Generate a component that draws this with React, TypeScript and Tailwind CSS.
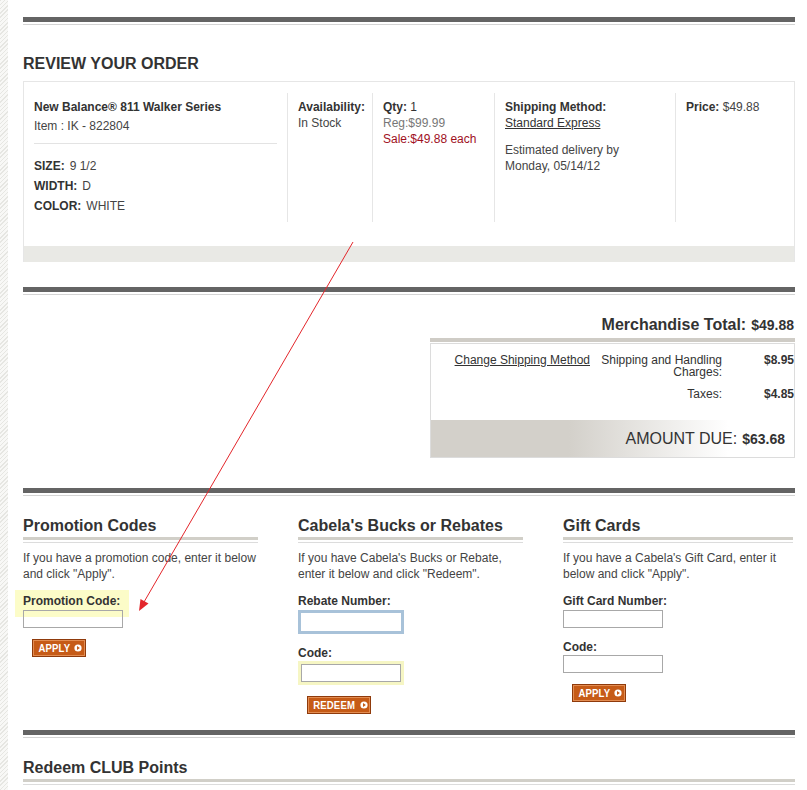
import React from "react";

function Sep({ className }: { className: string }) {
  return (
    <div className={className}>
      <div className="h-[5px] bg-[#646464]" />
      <div className="mt-[2px] h-[1px] bg-[#d4d4d4]" />
    </div>
  );
}

function ArrowIcon() {
  return (
    <svg width="8" height="8" viewBox="0 0 8 8" className="ml-[2px] shrink-0">
      <circle cx="4" cy="4" r="3.6" fill="#ffffff" />
      <path d="M3 2.1 L5.9 4 L3 5.9 Z" fill="#c65b17" />
    </svg>
  );
}

function OrangeButton({ label, className }: { label: string; className: string }) {
  return (
    <div
      className={
        "ml-[9px] mt-[11px] flex items-center justify-center border border-[#8f3a0b] bg-[#c65b17] shadow-[inset_0_0_0_1px_#e38d52] " +
        className
      }
    >
      <span className="inline-block scale-x-[0.87] text-[11px] font-bold leading-none tracking-[0.2px] text-white">
        {label}
      </span>
      <ArrowIcon />
    </div>
  );
}

function Heading({ title, className }: { title: string; className: string }) {
  return (
    <div className={className}>
      <h3 className="text-[16px] leading-[18px] font-bold text-[#333]">{title}</h3>
      <div className="mt-[2px] h-[3px] bg-[#d1cfc8]" />
      <div className="mt-[2px] h-[1px] bg-[#dcdcdc]" />
    </div>
  );
}

export default function App() {
  return (
    <div className="relative flex w-[807px] min-h-[790px] overflow-hidden bg-white text-[12px] text-[#333] font-['Liberation_Sans',Arial,sans-serif]">
      <div className="w-[8px] shrink-0 bg-[repeating-linear-gradient(135deg,#e6e6e2_0px,#e6e6e2_1px,#f8f8f6_1px,#f8f8f6_3px)]" />
      <div className="ml-[15px] w-[772px] shrink-0">
        <Sep className="mt-[17px]" />
        <h2 className="mt-[30px] text-[16px] leading-[18px] font-bold text-[#333]">REVIEW YOUR ORDER</h2>

        <div className="mt-[8px] border border-b-0 border-[#e6e6e6]">
          <div className="mt-[11px] flex h-[129px]">
            <div className="w-[263px] shrink-0 px-[10px] pt-[6px]">
              <div className="font-bold leading-[16px]">New Balance® 811 Walker Series</div>
              <div className="mt-[3px] leading-[16px] text-[#444]">Item : IK - 822804</div>
              <div className="mt-[9px] h-[1px] bg-[#e3e3e3]" />
              <div className="mt-[12px] leading-[20px]">
                <div>
                  <span className="font-bold">SIZE:</span>
                  <span className="ml-[5px] text-[#444]">9 1/2</span>
                </div>
                <div>
                  <span className="font-bold">WIDTH:</span>
                  <span className="ml-[5px] text-[#444]">D</span>
                </div>
                <div>
                  <span className="font-bold">COLOR:</span>
                  <span className="ml-[5px] text-[#444]">WHITE</span>
                </div>
              </div>
            </div>
            <div className="w-[85px] shrink-0 border-l border-[#e6e6e6] pl-[10px] pt-[6px] leading-[16px]">
              <div className="font-bold">Availability:</div>
              <div className="text-[#444]">In Stock</div>
            </div>
            <div className="w-[122px] shrink-0 border-l border-[#e6e6e6] pl-[10px] pt-[6px] leading-[16px]">
              <div>
                <span className="font-bold">Qty:</span> 1
              </div>
              <div className="text-[#777]">Reg:$99.99</div>
              <div className="text-[#a0101e]">Sale:$49.88 each</div>
            </div>
            <div className="w-[181px] shrink-0 border-l border-[#e6e6e6] pl-[10px] pt-[6px] leading-[16px]">
              <div className="font-bold">Shipping Method:</div>
              <div className="underline">Standard Express</div>
              <div className="mt-[11px] text-[#444]">Estimated delivery by</div>
              <div className="text-[#444]">Monday, 05/14/12</div>
            </div>
            <div className="flex-1 border-l border-[#e6e6e6] pl-[10px] pt-[6px] leading-[16px]">
              <span className="font-bold">Price:</span> <span className="text-[#444]">$49.88</span>
            </div>
          </div>
          <div className="mt-[24px] h-[16px] bg-[#e9e9e5]" />
        </div>

        <Sep className="mt-[25px]" />

        <div className="ml-auto w-[365px]">
          <div className="mt-[21px] pr-[1px] text-right leading-[18px]">
            <span className="text-[16px] font-bold">Merchandise Total:</span>
            <span className="ml-[5px] text-[14px] font-bold">$49.88</span>
          </div>
          <div className="mt-[3px] h-[4px] bg-[#cfccc6]" />
          <div className="mt-[1px] border border-[#dcdcdc] pt-[10px]">
            <div className="flex leading-[12px]">
              <div className="flex-1 text-right">
                <span className="underline">Change Shipping Method</span>
              </div>
              <div className="ml-[6px] w-[126px] shrink-0 text-right">Shipping and Handling Charges:</div>
              <div className="w-[72px] shrink-0 text-right font-bold">$8.95</div>
            </div>
            <div className="mt-[10px] flex leading-[12px]">
              <div className="flex-1" />
              <div className="ml-[6px] w-[126px] shrink-0 text-right">Taxes:</div>
              <div className="w-[72px] shrink-0 text-right font-bold">$4.85</div>
            </div>
            <div className="mt-[20px] flex h-[37px] items-center justify-end bg-[linear-gradient(to_right,#d3d0ca_0%,#d3d0ca_38%,#ffffff_82%)] pr-[9px] leading-[18px]">
              <span className="text-[16px] text-[#333]">AMOUNT DUE:</span>
              <span className="ml-[5px] text-[14px] font-bold">$63.68</span>
            </div>
          </div>
        </div>

        <Sep className="mt-[30px]" />

        <div className="flex">
          <div className="w-[275px] shrink-0">
            <Heading title="Promotion Codes" className="mt-[21px] w-[235px]" />
            <p className="mt-[7px] whitespace-nowrap leading-[16px] text-[#444]">
              If you have a promotion code, enter it below
              <br />
              and click "Apply".
            </p>
            <div className="relative mt-[11px]">
              <div className="absolute left-[-8px] top-[-3px] h-[27px] w-[114px] bg-[#fcfcc8]" />
              <div className="relative font-bold leading-[16px]">Promotion Code:</div>
              <div className="relative mt-[1px] h-[18px] w-[100px] border border-[#a8a8a8] bg-transparent" />
            </div>
            <OrangeButton label="APPLY" className="h-[18px] w-[54px]" />
          </div>

          <div className="w-[265px] shrink-0">
            <Heading title="Cabela's Bucks or Rebates" className="mt-[21px] w-[225px]" />
            <p className="mt-[7px] whitespace-nowrap leading-[16px] text-[#444]">
              If you have Cabela's Bucks or Rebate,
              <br />
              enter it below and click "Redeem".
            </p>
            <div className="mt-[11px] font-bold leading-[16px]">Rebate Number:</div>
            <div className="mt-[1px] h-[24px] w-[106px] border-[3px] border-[#a8c2d9] bg-white" />
            <div className="mt-[11px] font-bold leading-[16px]">Code:</div>
            <div className="h-[24px] w-[106px] bg-[#f6f6c4] p-[3px]">
              <div className="h-full w-full border border-[#a8a8a8] bg-white" />
            </div>
            <OrangeButton label="REDEEM" className="h-[18px] w-[64px]" />
          </div>

          <div className="w-[230px] shrink-0">
            <Heading title="Gift Cards" className="mt-[21px] w-[230px]" />
            <p className="mt-[7px] whitespace-nowrap leading-[16px] text-[#444]">
              If you have a Cabela's Gift Card, enter it
              <br />
              below and click "Apply".
            </p>
            <div className="mt-[11px] font-bold leading-[16px]">Gift Card Number:</div>
            <div className="mt-[1px] h-[18px] w-[100px] border border-[#a8a8a8] bg-white" />
            <div className="mt-[11px] font-bold leading-[16px]">Code:</div>
            <div className="h-[18px] w-[100px] border border-[#a8a8a8] bg-white" />
            <OrangeButton label="APPLY" className="h-[18px] w-[54px]" />
          </div>
        </div>

        <Sep className="mt-[16px]" />
        <Heading title="Redeem CLUB Points" className="mt-[21px] w-[772px]" />
      </div>

      <svg
        className="pointer-events-none absolute left-0 top-0"
        width="807"
        height="790"
        viewBox="0 0 807 790"
      >
        <line x1="353" y1="242" x2="144" y2="602" stroke="#e3262b" strokeWidth="1" />
        <polygon points="139,611 148.5,603.5 140.5,599" fill="#e3262b" />
      </svg>
    </div>
  );
}
